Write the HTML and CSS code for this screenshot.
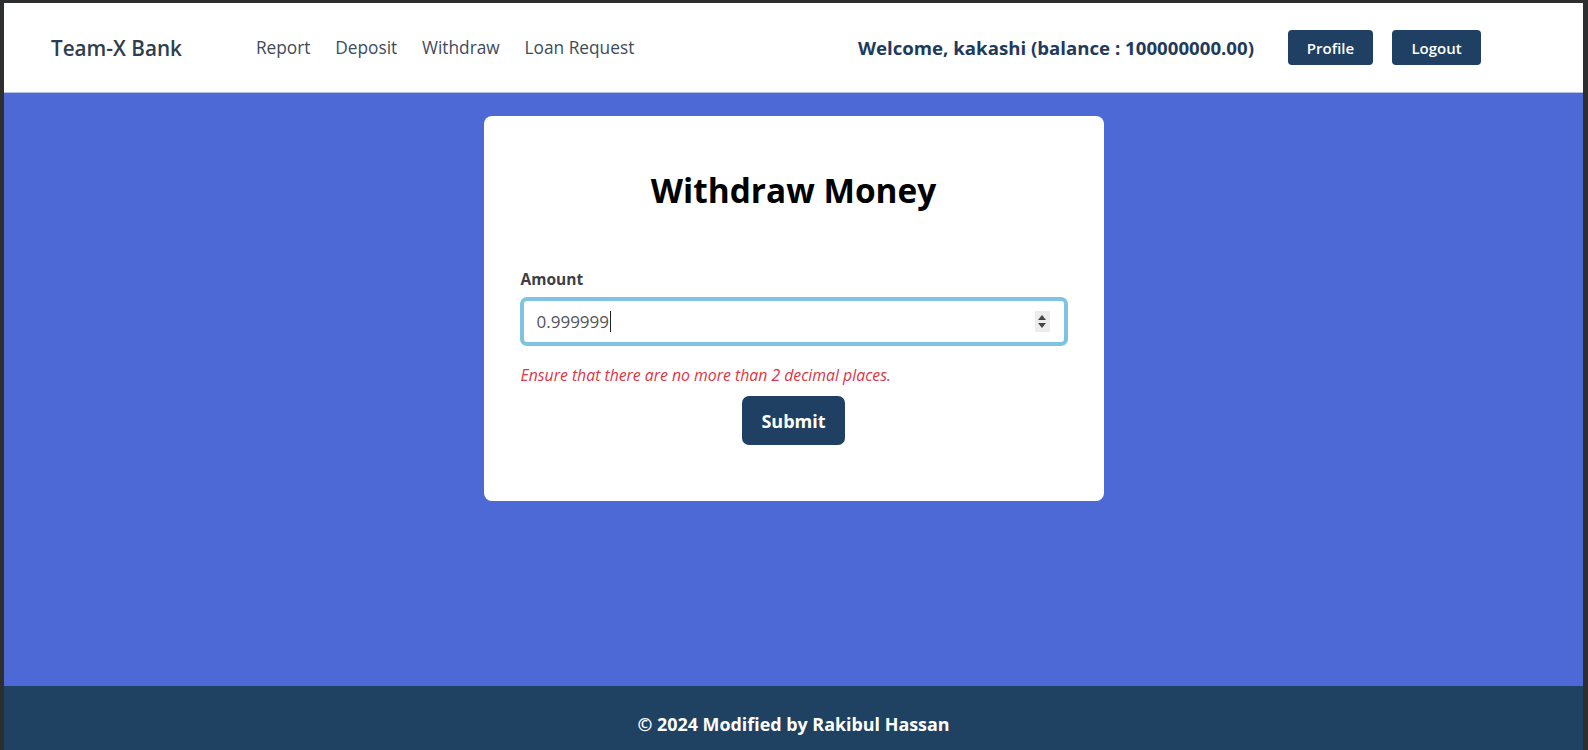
FILE: index.html
```html
<!DOCTYPE html>
<html lang="en">
<head>
<meta charset="utf-8">
<title>Team-X Bank - Withdraw</title>
<link rel="stylesheet" href="styles.css">
</head>
<body>
<div class="app">
  <header class="topbar">
    <a class="brand" href="#">Team-X Bank</a>
    <nav class="nav">
      <a href="#">Report</a>
      <a href="#">Deposit</a>
      <a href="#">Withdraw</a>
      <a href="#">Loan Request</a>
    </nav>
    <div class="user">
      <span class="welcome">Welcome, kakashi (balance : 100000000.00)</span>
      <a class="btn-nav btn-profile" href="#">Profile</a>
      <a class="btn-nav btn-logout" href="#">Logout</a>
    </div>
  </header>
  <main class="main">
    <section class="card">
      <h1 class="title">Withdraw Money</h1>
      <form class="form">
        <label class="label">Amount</label>
        <div class="field">
          <span class="value">0.999999</span><span class="caret"></span>
          <span class="spin"><span class="up"></span><span class="down"></span></span>
        </div>
        <p class="error">Ensure that there are no more than 2 decimal places.</p>
        <div class="actions"><button type="button" class="submit">Submit</button></div>
      </form>
    </section>
  </main>
  <footer class="footer">© 2024 Modified by Rakibul Hassan</footer>
</div>
</body>
</html>
```
FILE: styles.css
```css
* { box-sizing: border-box; }
html, body { margin: 0; height: 100%; }
body {
  background: #2d2e30;
  padding: 3px 5px 0 4px;
  font-family: "Open Sans", "Noto Sans", sans-serif;
}
.app {
  height: 747px;
  display: flex;
  flex-direction: column;
  background: #4d69d6;
}
.topbar {
  height: 90px;
  flex: none;
  background: #ffffff;
  border-bottom: 1px solid #b9c3e0;
  display: flex;
  align-items: center;
  padding: 0 102px 0 47px;
}
.brand {
  font-size: 20.7px;
  font-weight: 600;
  color: #2c3e50;
  text-decoration: none;
}
.nav {
  display: flex;
  gap: 24.8px;
  margin-left: 74px;
}
.nav a {
  font-size: 17.3px;
  color: #3d4b5c;
  text-decoration: none;
}
.user {
  margin-left: auto;
  display: flex;
  align-items: center;
}
.welcome {
  font-size: 18.65px;
  font-weight: 700;
  color: #1f3b5c;
  margin-right: 34px;
}
.btn-nav {
  height: 35px;
  display: flex;
  align-items: center;
  justify-content: center;
  background: #1f4062;
  color: #fff;
  border-radius: 4px;
  font-size: 15px;
  font-weight: 600;
  text-decoration: none;
}
.btn-profile { width: 85px; margin-right: 19px; }
.btn-logout { width: 89px; }
.main {
  flex: 1;
  display: flex;
  justify-content: center;
  align-items: flex-start;
  padding-top: 23px;
}
.card {
  width: 620px;
  height: 385px;
  background: #fff;
  border-radius: 8px;
  padding: 53px 36px 0;
}
.title {
  margin: 0;
  text-align: center;
  font-size: 33.4px;
  line-height: 42px;
  font-weight: 700;
  color: #000;
}
.form {
  display: flex;
  flex-direction: column;
  margin-top: 58px;
}
.label {
  font-size: 15.5px;
  line-height: 20px;
  font-weight: 700;
  color: #3c3f45;
  margin-left: 1px;
}
.field {
  margin-top: 8px;
  height: 49px;
  border: 4px solid #7fc3e2;
  border-radius: 7px;
  display: flex;
  align-items: center;
  padding: 0 14px 0 13px;
  font-size: 17px;
  color: #505459;
}
.caret {
  width: 1px;
  height: 21px;
  background: #222;
  margin-left: 1px;
}
.spin {
  margin-left: auto;
  width: 15px;
  height: 21px;
  background: #ececec;
  display: flex;
  flex-direction: column;
  align-items: center;
  justify-content: center;
  gap: 3px;
}
.up, .down {
  width: 0; height: 0;
  border-left: 4px solid transparent;
  border-right: 4px solid transparent;
}
.up { border-bottom: 5px solid #444; }
.down { border-top: 5px solid #444; }
.error {
  margin: 19px 0 0 1px;
  font-size: 15.8px;
  line-height: 20px;
  font-style: italic;
  color: #dc3545;
}
.actions {
  display: flex;
  justify-content: center;
  margin-top: 11px;
}
.submit {
  width: 103px;
  height: 49px;
  border: none;
  border-radius: 7px;
  background: #1f4062;
  color: #fff;
  font-family: inherit;
  font-size: 18px;
  font-weight: 700;
}
.footer {
  height: 64px;
  flex: none;
  background: #1f4262;
  color: #fff;
  display: flex;
  align-items: center;
  justify-content: center;
  font-size: 17.9px;
  font-weight: 700;
  padding-top: 12px;
}
```
